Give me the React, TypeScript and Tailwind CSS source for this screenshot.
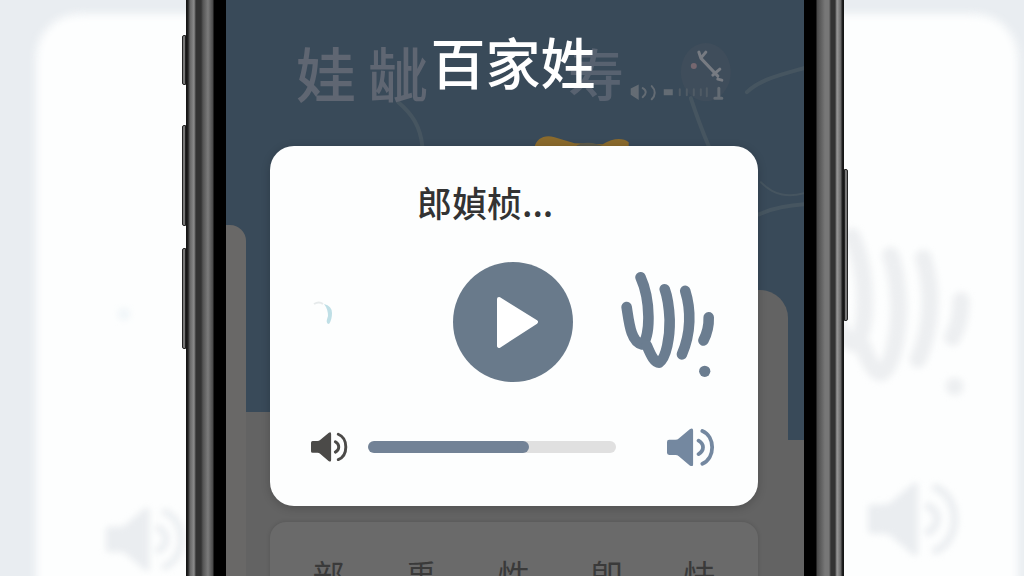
import { useState } from "react";
import { clsx } from "clsx";

type IconProps = {
  className?: string;
};

const SpeakerIcon = ({ className }: IconProps) => (
  <svg viewBox="0 0 114 92" className={className} aria-hidden="true">
    <path
      d="M0 33q0-5 5-5h15q5 0 8-3L54 3q8-5 8 3v80q0 8-8 3L28 67q-3-3-8-3H5q-5 0-5-5z"
      fill="currentColor"
    />
    <path
      d="M75 30C89 38 89 54 75 62M84 7C115 20 115 72 84 85"
      fill="none"
      stroke="currentColor"
      strokeWidth="9"
      strokeLinecap="round"
    />
  </svg>
);

const VoiceIcon = ({ className }: IconProps) => (
  <svg viewBox="64 66 284 320" className={className} aria-hidden="true">
    <g
      fill="none"
      stroke="currentColor"
      strokeWidth="32"
      strokeLinecap="round"
      strokeLinejoin="round"
    >
      <path d="M81 172C88 215 93 278 128 285C154 262 154 150 123 82" />
      <path d="M142 288C156 322 166 340 179 340C201 326 212 262 211 210C209 170 205 142 196 118" />
      <path d="M258 123C276 180 276 250 248 315" />
      <path d="M329 203C330 230 325 250 313 273" />
    </g>
    <circle cx="317" cy="366" r="17" fill="currentColor" />
  </svg>
);

const PlayIcon = ({ className }: IconProps) => (
  <svg viewBox="0 0 120 120" className={className} aria-hidden="true">
    <path
      d="M46 37L83 60L46 84Z"
      fill="white"
      stroke="white"
      strokeWidth="4"
      strokeLinejoin="round"
    />
  </svg>
);

// blurred copy of the player that fills the page behind the phone
const PageBackdrop = () => (
  <div aria-hidden="true" className="absolute inset-0 overflow-hidden">
    <div className="absolute top-3.5 right-1.5 -bottom-12 left-9 rounded-[44px] bg-[#fdfefe] blur-[5px]" />
    <div className="absolute top-[308px] left-[118px] size-3 rounded-full bg-[#f0f5f8] blur-[3px]" />
    <SpeakerIcon className="absolute bottom-1 left-[106px] w-20 text-[#eaedf0] blur-[3px]" />
    <VoiceIcon className="absolute top-[228px] right-[53px] w-[150px] text-[#edeff1] blur-[3px]" />
    <SpeakerIcon className="absolute right-16 bottom-5 w-[92px] text-[#eaedf0] blur-[3px]" />
  </div>
);

const sideButtons = {
  left: [
    "mt-[35px] h-[50px]",
    "mt-10 h-[101px]",
    "mt-[22px] h-[101px]",
  ],
  right: ["mt-[169px] h-[152px]"],
};

const SideButtons = ({ side }: { side: "left" | "right" }) => (
  <div className="flex w-1 shrink-0 flex-col">
    {sideButtons[side].map((size) => (
      <div
        key={size}
        className={clsx(
          "border border-[#222] bg-[#777]",
          side === "left" ? "rounded-l-xs" : "rounded-r-xs",
          size,
        )}
      />
    ))}
  </div>
);

const Rail = ({ side }: { side: "left" | "right" }) => (
  <div
    className={clsx(
      "w-10 shrink-0",
      side === "left"
        ? "bg-[linear-gradient(to_right,#111_0,#222_2px,#666_4px,#8c8c8c_8px,#333_10px,#333_15px,#555_17px,#7c7c7c_22px,#484848_27px,#000_28px)]"
        : "bg-[linear-gradient(to_left,#111_0,#222_2px,#666_3px,#999_7px,#333_9px,#333_13px,#777_15px,#777_19px,#484848_27px,#000_28px)]",
    )}
  />
);

const ScreenBackdrop = () => (
  <div
    aria-hidden="true"
    className="absolute inset-0 flex overflow-hidden bg-[#636363]"
  >
    <div className="flex h-[412px] flex-1 bg-[#394a59]">
      <div className="mt-[225px] h-[400px] w-5 rounded-tr-2xl bg-[#696867]" />
    </div>
    <div className="flex h-[440px] w-24 bg-[#394a59]">
      <div className="mt-[290px] mr-4 h-[400px] flex-1 rounded-tr-[28px] bg-[#636363]" />
    </div>
    <svg
      viewBox="226 0 577 240"
      className="absolute top-0 left-0 w-full"
      fill="none"
      strokeLinecap="round"
    >
      <g stroke="#465560" strokeWidth="4">
        <path d="M398 102C412 114 420 126 422 146" />
        <path d="M690 98C696 116 701 130 708 146" />
        <path d="M746 92C758 80 778 75 803 68" />
        <path d="M758 214C774 207 788 205 803 204" />
        <path d="M760 182C774 196 788 197 803 193" strokeWidth="2" />
      </g>
      <path
        d="M534 147C536 138 544 134 554 137L574 143L602 144C612 138 622 137 628 142V147Z"
        fill="#8a6a2c"
      />
      <path d="M574 147C580 141 594 141 604 147Z" fill="#5d5a4a" />
      <ellipse cx="705" cy="72" rx="25" ry="29" fill="#3f4d5b" />
      <path
        d="M700 58L717 76M700 58L698 52M700 58L705 52M712 75L719 69M717 79L721 80"
        stroke="#777b82"
        strokeWidth="3"
      />
      <circle cx="693" cy="66" r="3" fill="#76676f" />
      <g stroke="#646c74" strokeWidth="2">
        <path d="M631 89L637 86V98L631 94Z" fill="#646c74" />
        <path d="M642 88C646 90 646 94 642 97M651 86C655 90 655 95 651 99" />
        <path d="M664 90H671V94H664Z" fill="#646c74" />
        <path
          d="M679 89V95M686 89V95M693 89V95M700 89V95M706 88V96"
          stroke="#505b65"
        />
        <path d="M718 88V97M714 98H721" strokeWidth="3" />
      </g>
    </svg>
    <div className="absolute top-9 left-[70px] flex items-center gap-3 text-[60px] leading-[72px] font-medium text-[#5f6672]">
      <span>娃</span>
      <span>龇</span>
    </div>
    <span className="absolute top-9 right-[180px] text-[56px] leading-[72px] font-medium text-[#586270]">
      寿
    </span>
  </div>
);

const VolumeSlider = () => {
  const [volume, setVolume] = useState(63);

  return (
    <input
      type="range"
      aria-label="音量"
      min={0}
      max={100}
      value={volume}
      onChange={(e) => setVolume(Number(e.target.value))}
      className="mr-[51px] ml-5 h-3 min-w-0 flex-1 cursor-pointer appearance-none rounded-full bg-[#e0e0e0] [&::-webkit-slider-thumb]:size-3 [&::-webkit-slider-thumb]:appearance-none [&::-webkit-slider-thumb]:rounded-full [&::-webkit-slider-thumb]:bg-[#728296]"
      style={{
        backgroundImage: `linear-gradient(to right, #728296 calc(6px + (100% - 12px) * ${volume / 100}), transparent 0)`,
      }}
    />
  );
};

const PlayerDialog = () => (
  <section
    aria-labelledby="track-title"
    className="mt-[54px] mr-[46px] ml-11 rounded-3xl bg-[#fdfefe] pt-9 pr-[43px] pb-[39px] pl-[41px] shadow-[0_2px_10px_rgba(0,0,0,0.2)]"
  >
    <h2
      id="track-title"
      className="pl-[106px] text-[35px] leading-10 font-medium text-[#333]"
    >
      郎媜桢...
    </h2>
    <div className="mt-10 grid grid-cols-[1fr_120px_1fr] items-center">
      <svg viewBox="0 0 24 44" className="h-11 w-6" aria-hidden="true">
        <path d="M3 4Q8 1 12 4" fill="none" stroke="#e6eaeb" strokeWidth="2" />
        <path d="M13 4Q21 6 21 13Q21 20 18 24Q14 24 17 16Q17 9 13 4Z" fill="#bfdfe6" />
      </svg>
      <button
        type="button"
        aria-label="播放"
        className="size-[120px] cursor-pointer rounded-full bg-[#697a8b]"
      >
        <PlayIcon className="size-full" />
      </button>
      <VoiceIcon className="mt-1.5 w-[94px] justify-self-end text-[#6b7d90]" />
    </div>
    <div className="mt-[45px] flex h-10 items-center">
      <SpeakerIcon className="w-[37px] shrink-0 text-[#4b4a48]" />
      <VolumeSlider />
      <button type="button" aria-label="静音" className="cursor-pointer">
        <SpeakerIcon className="w-12 text-[#7488a0]" />
      </button>
    </div>
  </section>
);

const names = ["部", "禹", "性", "卽", "怯"];

export default function App() {
  return (
    <div className="relative flex h-screen justify-center overflow-hidden bg-[#e9edf1] pl-1.5 font-['Noto_Sans_CJK_SC',sans-serif]">
      <PageBackdrop />
      <div className="relative flex w-full max-w-[666px]">
        <SideButtons side="left" />
        <Rail side="left" />
        <main className="relative min-w-0 flex-1">
          <ScreenBackdrop />
          <div className="relative flex h-full flex-col pt-7">
            <h1 className="pr-1 text-center text-[55px] leading-[64px] font-medium text-white">
              百家姓
            </h1>
            <PlayerDialog />
            <ul className="mt-4 mr-[46px] ml-11 grid flex-1 grid-cols-5 rounded-t-2xl bg-[#6a6a6a] px-3 pt-8 text-center text-[32px] leading-10 text-[#3a3a3a] shadow-[0_0_4px_rgba(0,0,0,0.15)]">
              {names.map((name) => (
                <li key={name}>{name}</li>
              ))}
            </ul>
          </div>
        </main>
        <Rail side="right" />
        <SideButtons side="right" />
      </div>
    </div>
  );
}
